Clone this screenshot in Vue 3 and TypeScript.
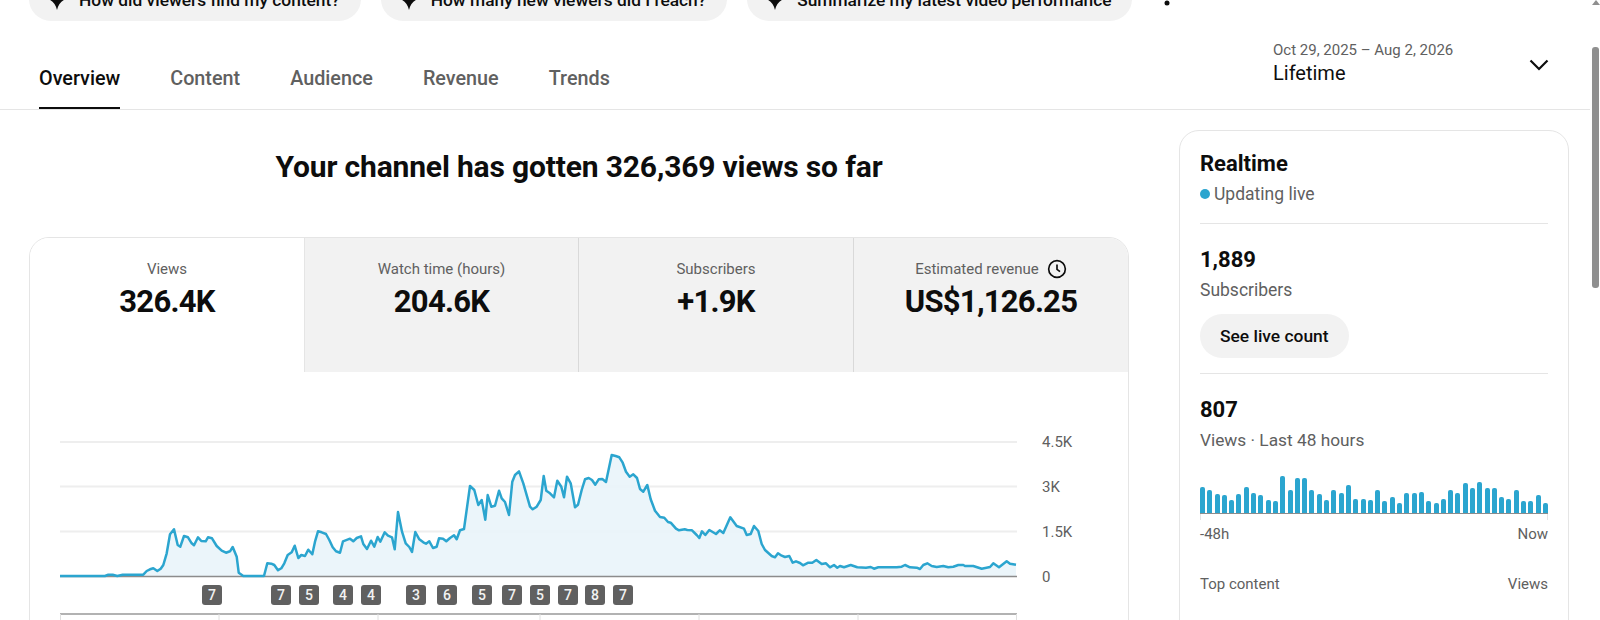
<template>
  <div class="page">
    <div class="main">
      <div class="chips">
        <div v-for="chip in chips" :key="chip" class="chip">
          <svg class="spark" viewBox="0 0 24 24" width="24" height="24">
            <path d="M12 0 C13.5 6.5 17.5 10.5 24 12 C17.5 13.5 13.5 17.5 12 24 C10.5 17.5 6.5 13.5 0 12 C6.5 10.5 10.5 6.5 12 0 Z" />
          </svg>
          <span>{{ chip }}</span>
        </div>
        <svg class="more" viewBox="0 0 6 24" width="6" height="24">
          <circle cx="3" cy="4" r="2.5" />
          <circle cx="3" cy="-4" r="2.5" />
        </svg>
      </div>

      <div class="tabbar">
        <div class="tabs">
          <div v-for="(tab, i) in tabs" :key="tab" class="tab" :class="{ active: i === 0 }">{{ tab }}</div>
        </div>
        <div class="period">
          <div class="period-text">
            <div class="period-range">Oct 29, 2025 – Aug 2, 2026</div>
            <div class="period-name">Lifetime</div>
          </div>
          <svg class="chevron" viewBox="0 0 24 24" width="24" height="24">
            <path d="M3.5 7.5 L12 16 L20.5 7.5" />
          </svg>
        </div>
      </div>

      <div class="content">
        <div class="left">
          <h1 class="headline">Your channel has gotten 326,369 views so far</h1>
          <div class="card">
            <div class="metrics">
              <div v-for="(m, i) in metrics" :key="m.label" class="metric" :class="{ selected: i === 0 }">
                <div class="metric-label">
                  {{ m.label }}
                  <svg v-if="m.clock" class="clock" viewBox="0 0 24 24" width="20" height="20">
                    <circle cx="12" cy="12" r="10" />
                    <path d="M12 6.5 V12.4 L15.6 15.2" />
                  </svg>
                </div>
                <div class="metric-value">{{ m.value }}</div>
              </div>
            </div>
            <div class="chart">
              <svg class="plot" width="1040" height="200" viewBox="0 0 1040 200">
                <line v-for="y in gridY" :key="y" class="grid" x1="0" x2="957" :y1="y" :y2="y" />
                <path class="area" :d="areaPath" />
                <line class="axis" x1="0" x2="957" y1="140.5" y2="140.5" />
                <path class="trace" :d="linePath" />
                <text v-for="t in yLabels" :key="t.text" class="ytext" x="982" :y="t.y">{{ t.text }}</text>
                <line class="xaxis" x1="0" x2="957" y1="178" y2="178" />
                <line v-for="x in xTicks" :key="x" class="xtick" :x1="x" :x2="x" y1="178" y2="200" />
              </svg>
              <div
                v-for="b in badges"
                :key="b.x"
                class="badge"
                :style="{ left: b.x + 30 + 'px' }"
              >{{ b.n }}</div>
            </div>
          </div>
        </div>

        <aside class="realtime">
          <div class="rt-title">Realtime</div>
          <div class="rt-live"><span class="dot"></span>Updating live</div>
          <div class="rt-rule"></div>
          <div class="rt-number">1,889</div>
          <div class="rt-sub">Subscribers</div>
          <div class="rt-button">See live count</div>
          <div class="rt-rule second"></div>
          <div class="rt-number">807</div>
          <div class="rt-sub views-sub">Views · Last 48 hours</div>
          <div class="bars">
            <div v-for="(h, i) in barHeights" :key="i" class="bar" :style="{ height: h + 'px' }"></div>
          </div>
          <div class="bars-ticks"></div>
          <div class="bars-axis">
            <span>-48h</span>
            <span>Now</span>
          </div>
          <div class="rt-head">
            <span>Top content</span>
            <span>Views</span>
          </div>
        </aside>
      </div>
    </div>

    <div class="scrollbar">
      <div class="arrow"></div>
      <div class="thumb"></div>
    </div>
  </div>
</template>

<script setup lang="ts">
import { computed } from 'vue'

const chips = [
  'How did viewers find my content?',
  'How many new viewers did I reach?',
  'Summarize my latest video performance',
]

const tabs = ['Overview', 'Content', 'Audience', 'Revenue', 'Trends']

const metrics = [
  { label: 'Views', value: '326.4K', clock: false },
  { label: 'Watch time (hours)', value: '204.6K', clock: false },
  { label: 'Subscribers', value: '+1.9K', clock: false },
  { label: 'Estimated revenue', value: 'US$1,126.25', clock: true },
]

// chart origin on the page is x=60, y=436
const gridY = [6, 50.5, 95.5]
const xTicks = [0.5, 159, 318, 480, 639, 798, 956.5]
const yLabels = [
  { text: '4.5K', y: 11 },
  { text: '3K', y: 56 },
  { text: '1.5K', y: 101 },
  { text: '0', y: 146 },
]

const badges = [
  { x: 142, n: 7 }, { x: 211, n: 7 }, { x: 239, n: 5 }, { x: 273, n: 4 }, { x: 301, n: 4 },
  { x: 346, n: 3 }, { x: 377, n: 6 }, { x: 412, n: 5 }, { x: 442, n: 7 }, { x: 470, n: 5 },
  { x: 498, n: 7 }, { x: 525, n: 8 }, { x: 553, n: 7 },
]

// traced from the reference, x and y at 3x scale per chart section
const partA = [[60,468],[195,468],[205,464],[218,464],[232,468],[248,464],[310,464],[320,453],[330,448],[340,445],[352,453],[362,446],[370,435],[380,400],[390,343],[402,328],[413,375],[421,380],[432,348],[444,352],[455,370],[462,376],[474,352],[484,363],[497,364],[504,352],[516,355],[530,378],[545,392],[558,398],[570,394],[578,381],[590,410],[596,458],[610,468],[672,468],[682,430],[694,431],[703,435],[714,451],[724,445],[733,430],[743,405],[755,397],[764,377],[775,414],[784,405],[795,408],[805,389],[817,403],[825,365],[834,334],[845,337],[858,342],[868,360],[878,382],[888,394],[900,398],[909,364],[930,356],[940,364],[950,354],[963,349],[970,372],[981,387],[993,362],[1003,380],[1013,351],[1021,365],[1034,337],[1044,347],[1056,352],[1064,388]]
const partB = [[54,276],[66,335],[77,370],[88,381],[96,396],[106,336],[118,358],[130,367],[138,371],[148,364],[159,384],[170,380],[177,355],[189,356],[199,364],[210,354],[222,346],[230,358],[240,331],[252,327],[270,198],[283,210],[295,255],[305,240],[316,299],[323,225],[334,260],[345,257],[357,212],[365,235],[375,246],[387,285],[397,185],[405,165],[417,154],[430,190],[450,260],[458,268],[470,260],[482,240],[491,168],[499,212],[510,220],[522,232],[532,182],[544,200],[552,232],[561,170],[572,190],[585,262],[594,254],[605,210],[615,178],[626,174],[636,180],[646,194],[656,178],[667,177],[678,186],[695,105],[707,108],[718,112],[728,128],[738,155],[749,170],[760,163],[771,174],[780,207],[790,215],[802,195],[812,238],[825,272],[840,291],[853,293],[864,306],[872,308],[888,326],[897,331],[914,328],[922,330],[936,331],[950,345],[958,354],[966,334],[976,345],[988,330],[1008,342],[1019,331],[1030,339],[1051,292]]
const partC = [[50,318],[72,326],[80,345],[92,342],[102,318],[115,333],[125,372],[135,390],[155,408],[165,412],[174,400],[185,407],[195,411],[208,408],[218,428],[228,424],[240,429],[249,436],[265,428],[277,428],[289,420],[305,432],[318,430],[330,442],[342,435],[352,443],[360,438],[372,442],[392,435],[412,442],[438,443],[452,441],[462,446],[475,442],[530,442],[545,440],[555,435],[570,442],[590,443],[600,447],[610,435],[622,430],[635,438],[650,441],[670,438],[685,442],[700,440],[715,435],[730,435],[735,438],[760,438],[785,446],[810,441],[820,430],[837,442],[860,424],[870,431],[888,434]]

function toChart(part: number[][], pageX: number) {
  return part.map(([x, y]) => [+(pageX + x / 3 - 60).toFixed(1), +(420 + y / 3 - 436).toFixed(1)])
}

const points = [...toChart(partA, 40), ...toChart(partB, 380), ...toChart(partC, 720)]

const linePath = computed(() => 'M' + points.map((p) => p.join(' ')).join(' L'))
const areaPath = computed(() => {
  const last = points[points.length - 1]
  return `${linePath.value} L${last[0]} 140 L0 140 Z`
})

const barTops = [323,334,345,349,364,345,323,342,349,364,367,290,334,297,297,334,345,364,334,342,319,360,360,364,334,367,353,371,342,342,338,367,371,360,334,342,312,327,308,327,327,353,360,334,367,367,349,371]
const barHeights = barTops.map((t) => +((402 - t) / 3).toFixed(1))
</script>

<style>
html, body {
  margin: 0;
  background: #fff;
  overflow: hidden;
}
</style>

<style scoped>
.page {
  display: flex;
  width: 1600px;
  height: 620px;
  overflow: hidden;
  font-family: Roboto, "Liberation Sans", sans-serif;
  color: #0d0d0d;
}

.main {
  width: 1590px;
}

.chips {
  display: flex;
  align-items: center;
  gap: 20px;
  height: 44px;
  margin-top: -23px;
  padding-left: 29px;
}

.chip {
  display: flex;
  align-items: center;
  gap: 10px;
  height: 44px;
  padding: 0 21px 0 16px;
  border-radius: 22px;
  background: #f2f2f2;
  font-size: 17.35px;
  font-weight: 500;
  white-space: nowrap;
}

.chip span {
  margin-top: 2px;
}

.spark {
  fill: #0d0d0d;
  margin-top: -2px;
}

.more {
  margin-left: 12px;
  fill: #0d0d0d;
  align-self: flex-start;
  margin-top: 22px;
  overflow: visible;
}

.tabbar {
  display: flex;
  justify-content: space-between;
  height: 88px;
  border-bottom: 1px solid #e5e5e5;
  padding: 0 39px 0 39px;
}

.tabs {
  display: flex;
  gap: 50px;
}

.tab {
  height: 86px;
  padding-top: 45px;
  box-sizing: border-box;
  line-height: 26px;
  font-size: 19.8px;
  font-weight: 500;
  color: #606060;
}

.tab.active {
  height: 88px;
  color: #0d0d0d;
  border-bottom: 2px solid #0d0d0d;
}

.period {
  display: flex;
  width: 278px;
  justify-content: space-between;
  padding-top: 19px;
  box-sizing: border-box;
}

.period-range {
  font-size: 15px;
  line-height: 20px;
  color: #606060;
}

.period-name {
  font-size: 20px;
  line-height: 26px;
}

.chevron {
  fill: none;
  stroke: #0d0d0d;
  stroke-width: 2.2;
  margin-top: 13px;
}

.content {
  display: flex;
  align-items: flex-start;
  padding-left: 29px;
  gap: 50px;
}

.left {
  width: 1100px;
}

.headline {
  margin: 0;
  padding-top: 39px;
  height: 88px;
  box-sizing: border-box;
  text-align: center;
  font-size: 30px;
  line-height: 36px;
  font-weight: 700;
  letter-spacing: -0.16px;
}

.card {
  margin-top: 39px;
  height: 500px;
  box-sizing: border-box;
  border: 1px solid #e5e5e5;
  border-radius: 20px;
  overflow: hidden;
}

.metrics {
  display: grid;
  grid-template-columns: 274px 274px 275px 1fr;
  height: 134px;
}

.metric {
  background: #f2f2f2;
  border-left: 1px solid #d9d9d9;
  padding-top: 21px;
  box-sizing: border-box;
  text-align: center;
}

.metric.selected {
  background: #fff;
  border-left: none;
}

.metric:nth-child(2) {
  border-left-color: #e5e5e5;
}

.metric-label {
  display: flex;
  align-items: center;
  justify-content: center;
  gap: 8px;
  height: 20px;
  font-size: 15px;
  line-height: 20px;
  color: #606060;
}

.clock {
  fill: none;
  stroke: #0d0d0d;
  stroke-width: 2;
}

.metric-value {
  margin-top: 3px;
  font-size: 31px;
  line-height: 40px;
  font-weight: 700;
  letter-spacing: -0.75px;
}

.chart {
  position: relative;
  padding: 64px 0 0 30px;
}

.plot {
  display: block;
  overflow: visible;
}

.grid {
  stroke: #eeeeee;
  stroke-width: 2;
}

.area {
  fill: #e9f4fa;
  opacity: 0.9;
}

.axis {
  stroke: #8c8c8c;
  stroke-width: 1.5;
}

.trace {
  fill: none;
  stroke: #2ba5cf;
  stroke-width: 2.5;
  stroke-linejoin: round;
}

.ytext {
  font-size: 15px;
  fill: #606060;
}

.xaxis {
  stroke: #999999;
  stroke-width: 1.5;
}

.xtick {
  stroke: #e0e0e0;
  stroke-width: 1;
}

.badge {
  position: absolute;
  top: 213px;
  width: 20px;
  height: 20px;
  border-radius: 3px;
  background: #606060;
  color: #f2f2f2;
  font-size: 14px;
  font-weight: 500;
  line-height: 20px;
  text-align: center;
}

.realtime {
  width: 390px;
  height: 600px;
  box-sizing: border-box;
  margin-top: 20px;
  padding: 20px;
  border: 1px solid #e5e5e5;
  border-radius: 20px;
}

.rt-title {
  font-size: 22px;
  line-height: 26px;
  font-weight: 700;
}

.rt-live {
  display: flex;
  align-items: center;
  gap: 4px;
  margin-top: 5px;
  font-size: 17.5px;
  line-height: 24px;
  color: #606060;
}

.dot {
  width: 10px;
  height: 10px;
  border-radius: 50%;
  background: #2ba5cf;
}

.rt-rule {
  height: 1px;
  margin-top: 17px;
  background: #e5e5e5;
}

.rt-rule.second {
  margin-top: 15px;
}

.rt-number {
  margin-top: 21px;
  font-size: 22px;
  line-height: 30px;
  font-weight: 700;
}

.rt-sub {
  margin-top: 3px;
  font-size: 17.5px;
  line-height: 24px;
  color: #606060;
}

.views-sub {
  font-size: 17.3px;
}

.rt-button {
  display: inline-block;
  margin-top: 12px;
  height: 44px;
  padding: 0 20px;
  border-radius: 22px;
  background: #f2f2f2;
  font-size: 17.4px;
  line-height: 44px;
  font-weight: 500;
}

.bars {
  display: flex;
  align-items: flex-end;
  justify-content: space-between;
  height: 38px;
  margin-top: 23px;
  border-bottom: 1px solid #8c8c8c;
}

.bar {
  width: 5px;
  border-radius: 2px 2px 0 0;
  background: #2ba5cf;
}

.bars-ticks {
  height: 6px;
  border-left: 1px solid #e5e5e5;
  border-right: 1px solid #e5e5e5;
}

.bars-axis,
.rt-head {
  display: flex;
  justify-content: space-between;
  font-size: 15px;
  line-height: 20px;
  color: #606060;
}

.bars-axis {
  margin-top: 4px;
}

.rt-head {
  margin-top: 30px;
}

.scrollbar {
  position: relative;
  width: 10px;
}

.arrow {
  position: absolute;
  top: 0;
  left: 2px;
  border-left: 4px solid transparent;
  border-right: 4px solid transparent;
  border-bottom: 5px solid #8f8f8f;
}

.thumb {
  position: absolute;
  top: 47px;
  left: 2px;
  width: 7px;
  height: 241px;
  border-radius: 3px;
  background: #8f8f8f;
}
</style>
